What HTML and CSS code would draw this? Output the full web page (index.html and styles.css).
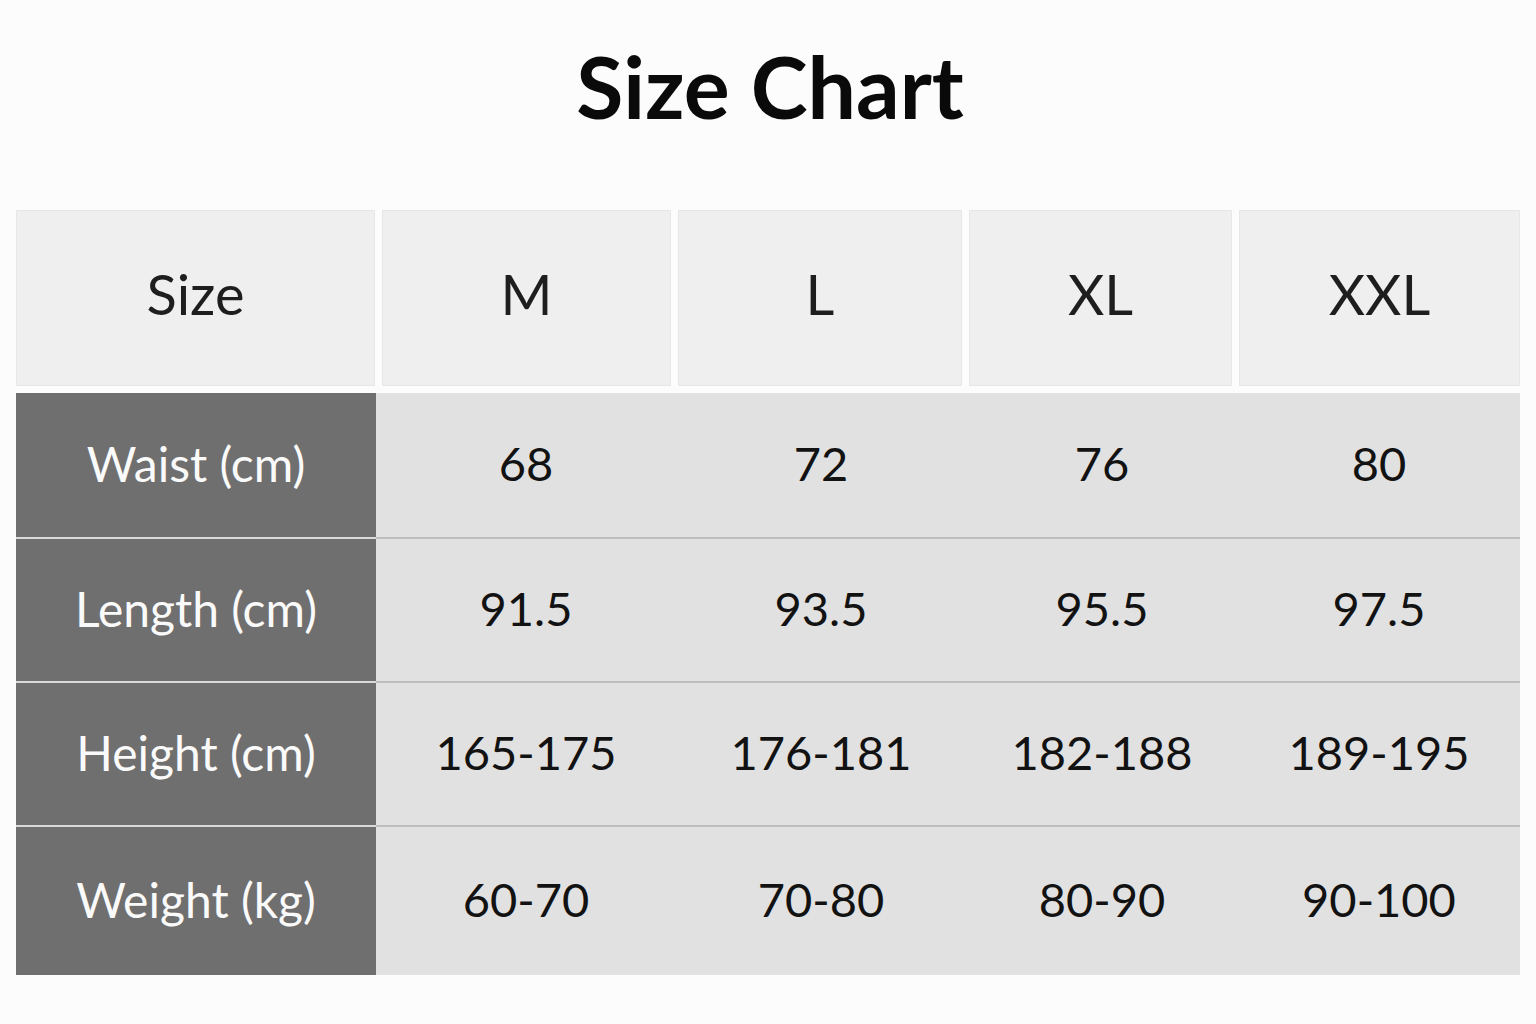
FILE: index.html
```html
<!DOCTYPE html>
<html lang="en">
<head>
<meta charset="utf-8">
<title>Size Chart</title>
<link rel="stylesheet" href="styles.css">
</head>
<body>
<main class="page">
  <h1 class="title">Size Chart</h1>
  <section class="chart">
    <div class="head-row">
      <div class="head-cell">Size</div>
      <div class="head-cell">M</div>
      <div class="head-cell">L</div>
      <div class="head-cell">XL</div>
      <div class="head-cell">XXL</div>
    </div>
    <div class="body">
      <div class="row">
        <div class="label">Waist (cm)</div>
        <div class="val">68</div>
        <div class="val">72</div>
        <div class="val">76</div>
        <div class="val">80</div>
      </div>
      <div class="row">
        <div class="label">Length (cm)</div>
        <div class="val">91.5</div>
        <div class="val">93.5</div>
        <div class="val">95.5</div>
        <div class="val">97.5</div>
      </div>
      <div class="row">
        <div class="label">Height (cm)</div>
        <div class="val">165-175</div>
        <div class="val">176-181</div>
        <div class="val">182-188</div>
        <div class="val">189-195</div>
      </div>
      <div class="row">
        <div class="label">Weight (kg)</div>
        <div class="val">60-70</div>
        <div class="val">70-80</div>
        <div class="val">80-90</div>
        <div class="val">90-100</div>
      </div>
    </div>
  </section>
</main>
</body>
</html>
```

FILE: styles.css
```css
html, body {
  margin: 0;
  padding: 0;
  background: #fcfcfc;
}

.page {
  width: 1536px;
  height: 1024px;
  font-family: Lato, "Open Sans", sans-serif;
  color: #111;
}

.title {
  margin: 43px 0 0 0;
  height: 86px;
  font-size: 86px;
  line-height: 86px;
  font-weight: 700;
  text-align: center;
  color: #0a0a0a;
  padding-left: 4px;
}

.chart {
  margin: 81px 0 0 16px;
  width: 1504px;
}

.head-row {
  display: grid;
  grid-template-columns: 359px 289px 284px 263px 281px;
  column-gap: 7px;
  height: 176px;
}

.head-cell {
  display: flex;
  align-items: center;
  justify-content: center;
  background: #efefef;
  border: 1px solid #e7e7e7;
  font-size: 56px;
  color: #1e1e1e;
  padding-bottom: 10px;
}

.body {
  margin-top: 7px;
  background: #e1e1e1;
}

.row {
  display: grid;
  grid-template-columns: 360px 300px 290px 272px 282px;
  height: 144px;
}

.row:last-child {
  height: 150px;
}

.label,
.val {
  display: flex;
  align-items: center;
  justify-content: center;
  box-sizing: border-box;
  padding-bottom: 4px;
  border-top: 2px solid #bdbdbd;
}

.label {
  background: #6f6f6f;
  border-top-color: #d9d9d9;
  color: #fafafa;
  font-size: 48px;
}

.val {
  font-size: 47px;
  color: #121212;
}

.row:first-child .label,
.row:first-child .val {
  border-top: none;
}
```
